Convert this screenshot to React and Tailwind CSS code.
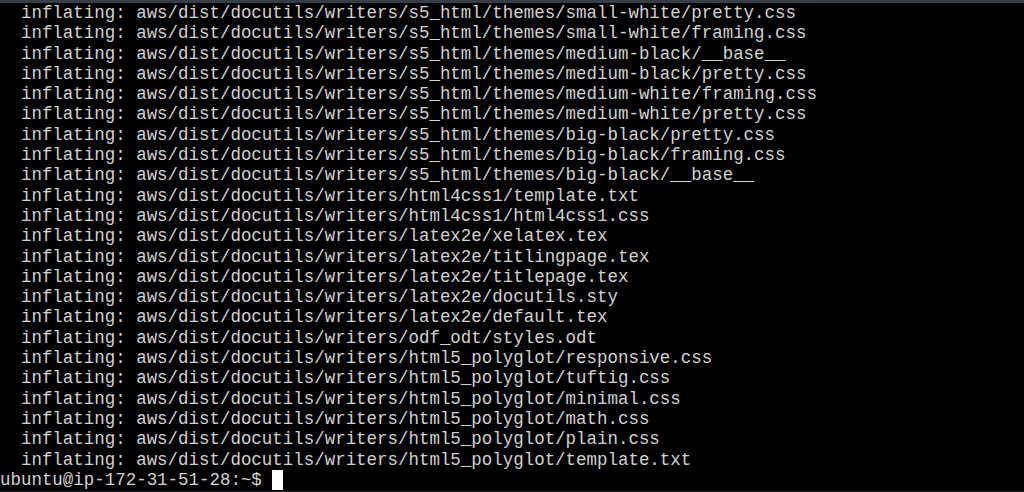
import React from 'react'

const files = [
  's5_html/themes/small-white/pretty.css',
  's5_html/themes/small-white/framing.css',
  's5_html/themes/medium-black/__base__',
  's5_html/themes/medium-black/pretty.css',
  's5_html/themes/medium-white/framing.css',
  's5_html/themes/medium-white/pretty.css',
  's5_html/themes/big-black/pretty.css',
  's5_html/themes/big-black/framing.css',
  's5_html/themes/big-black/__base__',
  'html4css1/template.txt',
  'html4css1/html4css1.css',
  'latex2e/xelatex.tex',
  'latex2e/titlingpage.tex',
  'latex2e/titlepage.tex',
  'latex2e/docutils.sty',
  'latex2e/default.tex',
  'odf_odt/styles.odt',
  'html5_polyglot/responsive.css',
  'html5_polyglot/tuftig.css',
  'html5_polyglot/minimal.css',
  'html5_polyglot/math.css',
  'html5_polyglot/plain.css',
  'html5_polyglot/template.txt',
]

export default function App() {
  return (
    <div className="w-[1024px] h-[492px] bg-black overflow-hidden border-t-[3px] border-t-[#363d4a] border-b border-b-[#1d222a]">
      <pre className="m-0 text-[17.47px] leading-[20.3px] text-[#d2d2d2] font-['Liberation_Mono','Courier_New',monospace] whitespace-pre">
        {files.map((f) => (
          <div key={f}>{'  inflating: aws/dist/docutils/writers/' + f}</div>
        ))}
        <div className="flex items-stretch">
          <span>{'ubuntu@ip-172-31-51-28:~$ '}</span>
          <span className="inline-block w-[10.5px] h-[20.3px] bg-white" />
        </div>
      </pre>
    </div>
  )
}
